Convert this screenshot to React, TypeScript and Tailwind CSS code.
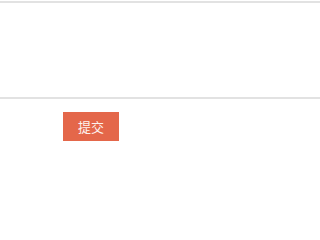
export default function App() {
  return (
    <div className="w-full min-h-[200px] bg-white overflow-hidden" style={{ fontFamily: '"Noto Sans CJK SC", "Noto Sans", sans-serif' }}>
      <div className="mt-px h-[98px] border-y-2 border-[#e2e2e2] bg-white" />
      <div className="flex pl-[63px] pt-[13px]">
        <button className="w-[56px] h-[29px] bg-[#e4674a] text-[#fdf3ef] text-[13px] leading-none flex items-center justify-center">
          提交
        </button>
      </div>
    </div>
  );
}
